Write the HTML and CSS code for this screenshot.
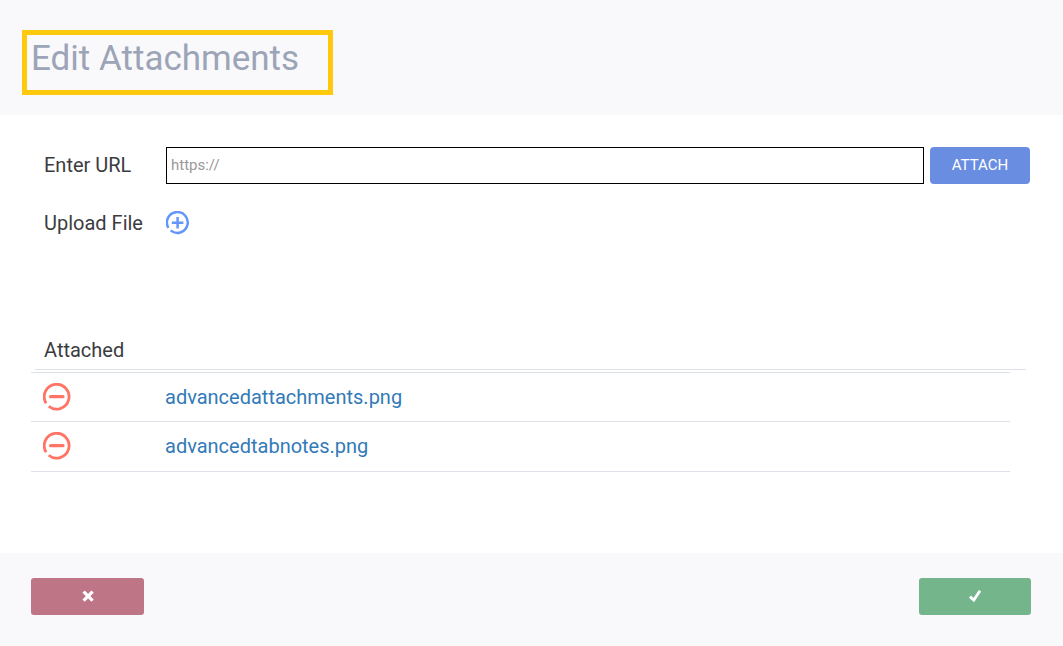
FILE: index.html
```
<!DOCTYPE html>
<html lang="en">
<head>
<meta charset="UTF-8">
<meta name="viewport" content="width=device-width, initial-scale=1.0">
<title>Edit Attachments</title>
<link rel="stylesheet" href="styles.css">
</head>
<body>
<div class="header">
  <h1>Edit Attachments</h1>
</div>
<div class="content">
  <div class="row url-row">
    <label for="url">Enter URL</label>
    <input type="url" id="url" placeholder="https://">
    <button class="attach">ATTACH</button>
  </div>
  <div class="row upload-row">
    <span class="label">Upload File</span>
    <button class="icon add" aria-label="Add file">
      <svg width="24" height="24" viewBox="0 0 24 24">
        <path d="M2.4 16.8A10.4 10.4 0 1 1 4.6 19.4"/>
        <path d="M11.6 6v11.6M5.8 11.8h11.6"/>
      </svg>
    </button>
  </div>
  <h2>Attached</h2>
  <ul class="files">
    <li>
      <button class="icon remove" aria-label="Remove">
        <svg width="28" height="28" viewBox="0 0 28 28">
          <path d="M3.1 20.2A12.4 12.4 0 1 1 5.7 23.2"/>
          <path class="bar" d="M7.6 13.7h12.4"/>
        </svg>
      </button>
      <a href="#">advancedattachments.png</a>
    </li>
    <li>
      <button class="icon remove" aria-label="Remove">
        <svg width="28" height="28" viewBox="0 0 28 28">
          <path d="M3.1 20.2A12.4 12.4 0 1 1 5.7 23.2"/>
          <path class="bar" d="M7.6 13.7h12.4"/>
        </svg>
      </button>
      <a href="#">advancedtabnotes.png</a>
    </li>
  </ul>
</div>
<div class="footer">
  <button class="cancel" aria-label="Cancel">
    <svg width="12" height="12" viewBox="0 0 12 12"><path d="M1.6 1.6l9 9M10.6 1.6l-9 9"/></svg>
  </button>
  <button class="save" aria-label="Save">
    <svg width="14" height="12" viewBox="0 0 14 12"><path d="M1.9 6.6L5.8 10.1L12 0.8"/></svg>
  </button>
</div>
</body>
</html>
```
FILE: styles.css
```
* {
  box-sizing: border-box;
}
body {
  margin: 0;
  height: 646px;
  display: flex;
  flex-direction: column;
  font-family: Roboto, sans-serif;
  font-size: 20px;
  line-height: 28px;
  color: #3c3c3f;
  background-color: #fff;
}
button {
  padding: 0;
  border: none;
  font-family: inherit;
  cursor: pointer;
}
svg {
  display: block;
  fill: none;
}
.header {
  height: 115px;
  padding: 30px 22px 0;
  background-color: #f9f9fb;
}
h1 {
  width: 311px;
  height: 65px;
  margin: 0;
  padding: 0 4px;
  border: 5px solid #ffc90e;
  font-size: 35px;
  font-weight: 400;
  line-height: 47px;
  color: #9ca4b7;
}
.content {
  flex: 1;
  padding: 32px 33px 0 31px;
}
.row {
  display: flex;
  align-items: center;
  padding-left: 13px;
}
.row label, .row .label {
  width: 122px;
}
.url-row {
  height: 37px;
}
.url-row label {
  padding-bottom: 1px;
}
#url {
  flex: 1;
  height: 37px;
  margin: 0 6px 0 0;
  padding: 0 4px 2px;
  border: 1px solid #000;
  font-family: inherit;
  font-size: 15px;
}
#url::placeholder {
  color: #999;
}
.attach {
  width: 100px;
  height: 37px;
  padding-bottom: 2px;
  border-radius: 4px;
  font-size: 15px;
  color: #fff;
  background-color: #698de1;
}
.upload-row {
  height: 28px;
  margin-top: 25px;
}
.icon {
  background: none;
}
.add {
  stroke: #6495fa;
  stroke-width: 2.5;
}
h2 {
  height: 34px;
  margin: 99px 4px 0 4px;
  padding-left: 9px;
  border-bottom: 1px solid #dfe1e8;
  font-size: 20px;
  font-weight: 400;
}
.files {
  width: 979px;
  margin: 2px 0 0;
  padding: 0;
  list-style: none;
  border-top: 1px solid #dfe1e8;
}
.files li {
  display: flex;
  align-items: center;
  height: 49px;
  padding-left: 12px;
  border-bottom: 1px solid #dfe1e8;
}
.files li:last-child {
  height: 50px;
  padding-bottom: 1px;
}
.remove {
  width: 28px;
  margin-right: 94px;
  stroke: #ff7464;
  stroke-width: 2.8;
}
.remove .bar {
  stroke-width: 3.2;
  stroke-linecap: round;
}
.files a {
  color: #337ab7;
  text-decoration: none;
}
.footer {
  display: flex;
  justify-content: space-between;
  height: 93px;
  padding: 25px 32px 0 31px;
  background-color: #f9f9fb;
}
.footer button {
  display: flex;
  align-items: center;
  justify-content: center;
  width: 113px;
  height: 37px;
  padding-bottom: 1px;
  border-radius: 3px;
  stroke: #fff;
  stroke-width: 3.2;
}
.footer .cancel {
  background-color: #be7686;
}
.footer .save {
  width: 112px;
  stroke-width: 2.8;
  background-color: #74b58c;
}
```
